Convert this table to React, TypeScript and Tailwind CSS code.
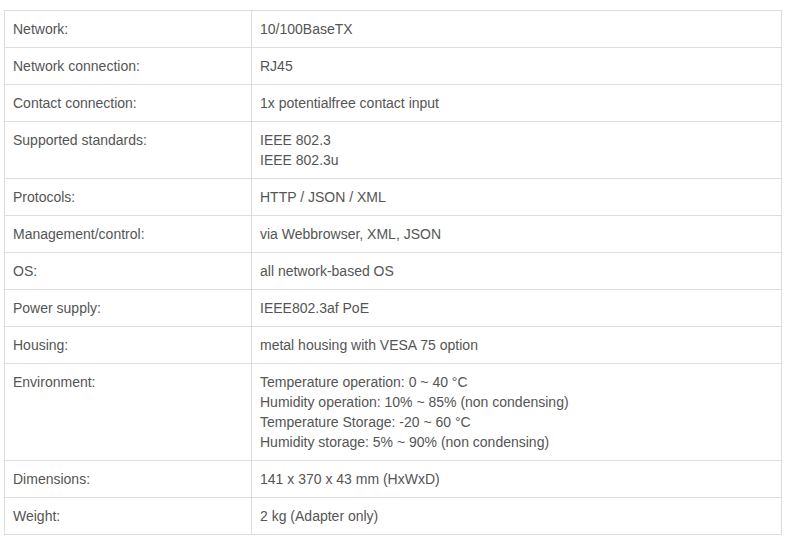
const specs: [string, string[]][] = [
  ['Network:', ['10/100BaseTX']],
  ['Network connection:', ['RJ45']],
  ['Contact connection:', ['1x potentialfree contact input']],
  ['Supported standards:', ['IEEE 802.3', 'IEEE 802.3u']],
  ['Protocols:', ['HTTP / JSON / XML']],
  ['Management/control:', ['via Webbrowser, XML, JSON']],
  ['OS:', ['all network-based OS']],
  ['Power supply:', ['IEEE802.3af PoE']],
  ['Housing:', ['metal housing with VESA 75 option']],
  [
    'Environment:',
    [
      'Temperature operation: 0 ~ 40 °C',
      'Humidity operation: 10% ~ 85% (non condensing)',
      'Temperature Storage: -20 ~ 60 °C',
      'Humidity storage: 5% ~ 90% (non condensing)',
    ],
  ],
  ['Dimensions:', ['141 x 370 x 43 mm (HxWxD)']],
  ['Weight:', ['2 kg (Adapter only)']],
]

export default function App() {
  return (
    <div className="w-[800px] h-[546px] bg-white pt-[10px] pl-1 font-['Liberation_Sans',Arial,sans-serif]">
      <table className="w-[778px] table-fixed border-collapse text-[14px] leading-5 text-[#555]">
        <colgroup>
          <col className="w-[247px]" />
          <col />
        </colgroup>
        <tbody>
          {specs.map(([label, values]) => (
            <tr key={label}>
              <td className="border border-[#ddd] px-2 py-2 align-top">{label}</td>
              <td className="border border-[#ddd] px-2 py-2 align-top">
                {values.map((v) => (
                  <div key={v}>{v}</div>
                ))}
              </td>
            </tr>
          ))}
        </tbody>
      </table>
    </div>
  )
}
